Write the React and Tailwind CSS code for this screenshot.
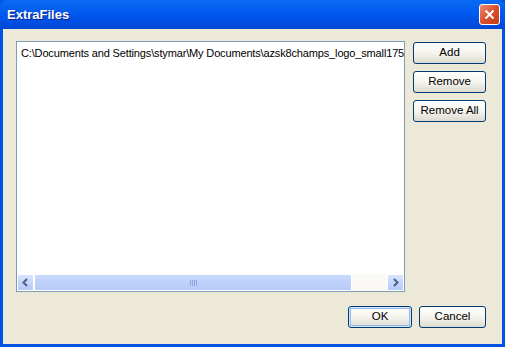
import React from 'react'

const font = { fontFamily: '"Liberation Sans", Arial, sans-serif' }

function XpButton({ children, primary, className = '' }) {
  return (
    <button
      className={`h-[22px] rounded-[3px] border border-[#003C74] bg-gradient-to-b from-[#FFFFFF] via-[#F5F4EE] to-[#DCDAD0] text-[11.5px] leading-none text-black ${
        primary ? 'shadow-[inset_0_0_0_1px_#CEE7FF,inset_0_0_0_2px_#98B8EA]' : ''
      } ${className}`}
    >
      {children}
    </button>
  )
}

function Chevron({ dir }) {
  return (
    <svg width="9" height="9" viewBox="0 0 9 9">
      <path
        d={dir === 'left' ? 'M6 1 L2.5 4.5 L6 8' : 'M3 1 L6.5 4.5 L3 8'}
        fill="none"
        stroke="#4D6185"
        strokeWidth="2"
      />
    </svg>
  )
}

function ScrollButton({ dir }) {
  return (
    <div className="flex h-[17px] w-[17px] items-center justify-center rounded-[2px] border border-white bg-gradient-to-b from-[#D9E5FE] to-[#B3C9F8]">
      <Chevron dir={dir} />
    </div>
  )
}

export default function App() {
  return (
    <div className="flex h-[347px] w-[505px] flex-col bg-[#0054E3]" style={font}>
      {/* title bar */}
      <div className="flex h-[29px] items-center justify-between rounded-t-[7px] bg-gradient-to-b from-[#0A6AF3] via-[#0058EE] to-[#0046D6] pl-[7px] pr-[5px]">
        <span className="text-[13px] font-bold text-white [text-shadow:1px_1px_0_#0A1E8C]">ExtraFiles</span>
        <div className="flex h-[21px] w-[21px] items-center justify-center rounded-[3px] border border-white bg-gradient-to-br from-[#E98A6E] via-[#D9502E] to-[#C23A17]">
          <svg width="11" height="11" viewBox="0 0 11 11">
            <path d="M1.5 1.5 L9.5 9.5 M9.5 1.5 L1.5 9.5" stroke="white" strokeWidth="2" />
          </svg>
        </div>
      </div>

      {/* body */}
      <div className="mx-[3px] mb-[3px] flex flex-1 flex-col bg-[#ECE9D8] pl-[13px] pr-[16px] pt-[12px] pb-[16px]">
        <div className="flex flex-1 gap-[8px]">
          <div className="flex w-[390px] flex-col border border-[#7F9DB9] bg-white">
            <div className="flex-1 overflow-hidden whitespace-nowrap pl-[4px] pt-[5px] text-[11px] leading-[13px] tracking-[-0.15px] text-black">
              C:\Documents and Settings\stymar\My Documents\azsk8champs_logo_small175
            </div>
            <div className="flex h-[17px] bg-[#FAF9F5]">
              <ScrollButton dir="left" />
              <div className="flex w-[318px] items-center justify-center rounded-[2px] border border-white bg-gradient-to-b from-[#C8D8FC] to-[#B6CBF9]">
                <div className="flex gap-[1px]">
                  <span className="h-[6px] w-[1px] bg-[#8BA5E6]" />
                  <span className="h-[6px] w-[1px] bg-[#8BA5E6]" />
                  <span className="h-[6px] w-[1px] bg-[#8BA5E6]" />
                  <span className="h-[6px] w-[1px] bg-[#8BA5E6]" />
                </div>
              </div>
              <div className="flex-1" />
              <ScrollButton dir="right" />
            </div>
          </div>
          <div className="flex flex-col gap-[7px] pt-[1px]">
            <XpButton className="w-[73px]">Add</XpButton>
            <XpButton className="w-[73px]">Remove</XpButton>
            <XpButton className="w-[73px]">Remove All</XpButton>
          </div>
        </div>
        <div className="mt-[14px] flex justify-end gap-[7px]">
          <XpButton primary className="w-[64px]">OK</XpButton>
          <XpButton className="w-[67px]">Cancel</XpButton>
        </div>
      </div>
    </div>
  )
}
